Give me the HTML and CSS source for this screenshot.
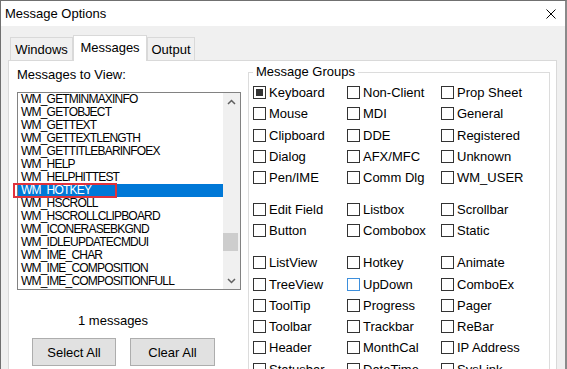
FILE: index.html
```html
<!DOCTYPE html>
<html lang="en">
<head>
<meta charset="UTF-8">
<title>Message Options</title>
<link rel="stylesheet" href="styles.css">
</head>
<body>

<div class="window">
  <div class="titlebar">
    <span class="title">Message Options</span>
    <svg class="close" width="10" height="10" viewBox="0 0 10 10"><path d="M0.5 0.5L9.5 9.5M9.5 0.5L0.5 9.5" stroke="#000" stroke-width="1"/></svg>
  </div>

  <div class="tabs">
    <div class="tab tab-windows">Windows</div>
    <div class="tab tab-messages active">Messages</div>
    <div class="tab tab-output">Output</div>
  </div>

  <div class="panel">
    <div class="left">
      <div class="label">Messages to View:</div>
      <div class="listbox">
        <ul class="items">
          <li>WM_GETMINMAXINFO</li>
          <li>WM_GETOBJECT</li>
          <li>WM_GETTEXT</li>
          <li>WM_GETTEXTLENGTH</li>
          <li>WM_GETTITLEBARINFOEX</li>
          <li>WM_HELP</li>
          <li>WM_HELPHITTEST</li>
          <li class="selected">WM_HOTKEY<span class="mark"></span></li>
          <li>WM_HSCROLL</li>
          <li>WM_HSCROLLCLIPBOARD</li>
          <li>WM_ICONERASEBKGND</li>
          <li>WM_IDLEUPDATECMDUI</li>
          <li>WM_IME_CHAR</li>
          <li>WM_IME_COMPOSITION</li>
          <li>WM_IME_COMPOSITIONFULL</li>
        </ul>
        <div class="scrollbar">
          <div class="arrow"><svg width="9" height="6" viewBox="0 0 9 6"><polyline points="1,5 4.5,1.5 8,5" fill="none" stroke="#606060" stroke-width="1.5"/></svg></div>
          <div class="thumb"></div>
          <div class="arrow down"><svg width="9" height="6" viewBox="0 0 9 6"><polyline points="1,1 4.5,4.5 8,1" fill="none" stroke="#606060" stroke-width="1.5"/></svg></div>
        </div>
      </div>
      <div class="count">1 messages</div>
      <div class="buttons">
        <button class="btn">Select All</button>
        <button class="btn btn-wide">Clear All</button>
      </div>
    </div>

    <fieldset class="groups">
      <legend>Message Groups</legend>
      <div class="grid">
        <label class="check"><span class="box partial"></span>Keyboard</label>
        <label class="check"><span class="box"></span>Non-Client</label>
        <label class="check"><span class="box"></span>Prop Sheet</label>
        <label class="check"><span class="box"></span>Mouse</label>
        <label class="check"><span class="box"></span>MDI</label>
        <label class="check"><span class="box"></span>General</label>
        <label class="check"><span class="box"></span>Clipboard</label>
        <label class="check"><span class="box"></span>DDE</label>
        <label class="check"><span class="box"></span>Registered</label>
        <label class="check"><span class="box"></span>Dialog</label>
        <label class="check"><span class="box"></span>AFX/MFC</label>
        <label class="check"><span class="box"></span>Unknown</label>
        <label class="check"><span class="box"></span>Pen/IME</label>
        <label class="check"><span class="box"></span>Comm Dlg</label>
        <label class="check"><span class="box"></span>WM_USER</label>
      </div>
      <div class="grid">
        <label class="check"><span class="box"></span>Edit Field</label>
        <label class="check"><span class="box"></span>Listbox</label>
        <label class="check"><span class="box"></span>Scrollbar</label>
        <label class="check"><span class="box"></span>Button</label>
        <label class="check"><span class="box"></span>Combobox</label>
        <label class="check"><span class="box"></span>Static</label>
      </div>
      <div class="grid">
        <label class="check"><span class="box"></span>ListView</label>
        <label class="check"><span class="box"></span>Hotkey</label>
        <label class="check"><span class="box"></span>Animate</label>
        <label class="check"><span class="box"></span>TreeView</label>
        <label class="check"><span class="box hover"></span>UpDown</label>
        <label class="check"><span class="box"></span>ComboEx</label>
        <label class="check"><span class="box"></span>ToolTip</label>
        <label class="check"><span class="box"></span>Progress</label>
        <label class="check"><span class="box"></span>Pager</label>
        <label class="check"><span class="box"></span>Toolbar</label>
        <label class="check"><span class="box"></span>Trackbar</label>
        <label class="check"><span class="box"></span>ReBar</label>
        <label class="check"><span class="box"></span>Header</label>
        <label class="check"><span class="box"></span>MonthCal</label>
        <label class="check"><span class="box"></span>IP Address</label>
        <label class="check"><span class="box"></span>Statusbar</label>
        <label class="check"><span class="box"></span>DateTime</label>
        <label class="check"><span class="box"></span>SysLink</label>
      </div>
    </fieldset>
  </div>
</div>

</body>
</html>
```

FILE: styles.css
```css
body {
  margin: 0;
  font-family: "Liberation Sans", Arial, sans-serif;
  font-size: 13px;
  color: #000;
}
.window {
  width: 567px;
  height: 369px;
  box-sizing: border-box;
  overflow: hidden;
  background-color: #f0f0f0;
  border-top: 1px solid #707070;
  border-left: 1px solid #707070;
  border-right: 2px solid #8a8a8a;
}
.titlebar {
  height: 25px;
  display: flex;
  align-items: center;
  justify-content: space-between;
  padding: 0 9px 0 4px;
  background-color: #fff;
}
.tabs {
  display: flex;
  align-items: flex-end;
  height: 25px;
  margin-top: 9px;
  padding-left: 9px;
}
.tab {
  height: 23px;
  box-sizing: border-box;
  display: flex;
  justify-content: center;
  align-items: center;
  border: 1px solid #d9d9d9;
  border-bottom: none;
  background-color: #f0f0f0;
}
.tab-windows {
  width: 63px;
}
.tab-messages {
  width: 74px;
}
.tab-output {
  width: 48px;
}
.tab.active {
  height: 26px;
  margin-bottom: -1px;
  padding-bottom: 2px;
  position: relative;
  z-index: 1;
  background-color: #fff;
}
.panel {
  display: flex;
  width: 549px;
  height: 400px;
  margin-left: 7px;
  box-sizing: border-box;
  background-color: #fff;
  border: 1px solid #d9d9d9;
}
.left {
  width: 239px;
  flex: none;
  box-sizing: border-box;
  padding: 6px 0 0 8px;
}
.label {
  line-height: 16px;
}
.listbox {
  display: flex;
  width: 224px;
  height: 198px;
  margin-top: 9px;
  box-sizing: border-box;
  border: 1px solid #828282;
}
.items {
  flex: 1;
  list-style: none;
  margin: 0;
  padding: 0;
  font-size: 12px;
  letter-spacing: -0.8px;
}
.items li {
  height: 13px;
  line-height: 13px;
  padding-left: 3px;
  white-space: nowrap;
}
.items .selected {
  position: relative;
  background-color: #0078d7;
  color: #fff;
}
.mark {
  position: absolute;
  left: -5px;
  top: -1px;
  width: 104px;
  height: 15px;
  box-sizing: border-box;
  border: 2px solid #e0323c;
}
.scrollbar {
  width: 17px;
  display: flex;
  flex-direction: column;
  background-color: #f0f0f0;
}
.arrow {
  height: 17px;
  display: flex;
  justify-content: center;
  align-items: center;
}
.arrow.down {
  margin-top: auto;
}
.thumb {
  height: 18px;
  margin: 123px 2px 0 0;
  background-color: #cdcdcd;
}
.count {
  margin: 23px 0 0 61px;
  line-height: 16px;
}
.buttons {
  display: flex;
  gap: 14px;
  margin: 9px 0 0 15px;
}
.btn {
  width: 84px;
  height: 28px;
  padding: 0;
  font: inherit;
  color: #000;
  background-color: #e1e1e1;
  border: 1px solid #adadad;
}
.btn-wide {
  width: 85px;
}
.groups {
  width: 302px;
  min-width: 0;
  box-sizing: border-box;
  margin: 3px 0 0 0;
  padding: 2px 0 0 4px;
  border: 1px solid #dcdcdc;
  align-self: flex-start;
}
.groups legend {
  padding: 0 3px;
  line-height: 16px;
}
.grid {
  display: grid;
  grid-template-columns: repeat(3, 94px);
  grid-auto-rows: 21.3px;
}
.grid + .grid {
  margin-top: 10.5px;
}
.check {
  display: flex;
  align-items: center;
  gap: 3px;
  white-space: nowrap;
}
.box {
  width: 13px;
  height: 13px;
  flex: none;
  box-sizing: border-box;
  display: flex;
  justify-content: center;
  align-items: center;
  border: 1px solid #333;
  background-color: #fff;
}
.box.partial::after {
  content: "";
  width: 7px;
  height: 7px;
  background-color: #333;
}
.box.hover {
  border-color: #3d8fdc;
}
```
